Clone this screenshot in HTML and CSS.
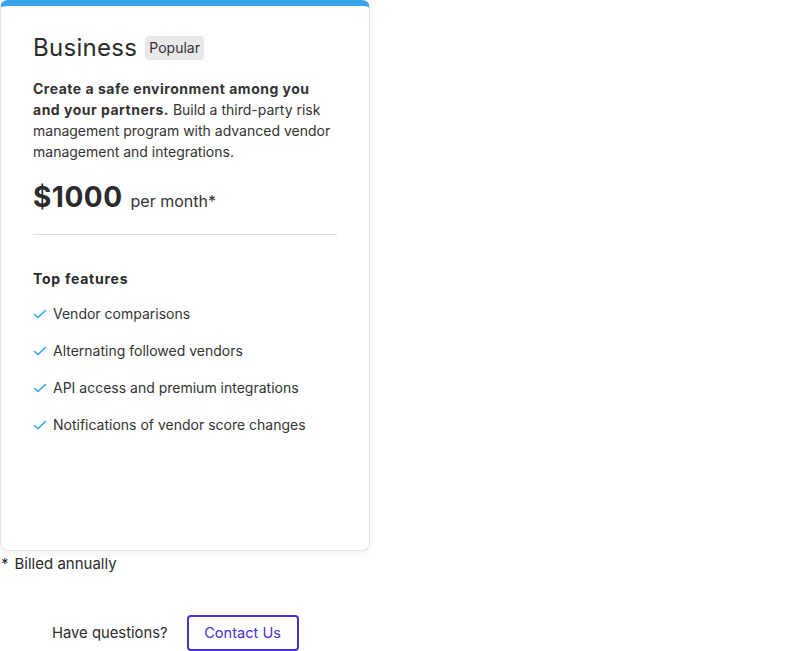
FILE: index.html
```html
<!DOCTYPE html>
<html>
<head>
<meta charset="utf-8">
<link rel="stylesheet" href="styles.css">
</head>
<body>
<div class="card">
  <div class="head">
    <h2 class="title">Business</h2>
    <span class="badge">Popular</span>
  </div>
  <p class="desc"><strong>Create a safe environment among you and your partners.</strong> Build a third-party risk management program with advanced vendor management and integrations.</p>
  <div class="price"><span class="amount">$1000</span><span class="period">per month*</span></div>
  <hr class="divider">
  <h3 class="features-title">Top features</h3>
  <ul class="features">
    <li><svg class="check" viewBox="0 0 14 14" width="14" height="14"><path d="M1.5 7.5 L5 10.5 L12.5 3.5" fill="none" stroke="#2fa4f0" stroke-width="1.6" stroke-linecap="round" stroke-linejoin="round"/></svg>Vendor comparisons</li>
    <li><svg class="check" viewBox="0 0 14 14" width="14" height="14"><path d="M1.5 7.5 L5 10.5 L12.5 3.5" fill="none" stroke="#2fa4f0" stroke-width="1.6" stroke-linecap="round" stroke-linejoin="round"/></svg>Alternating followed vendors</li>
    <li><svg class="check" viewBox="0 0 14 14" width="14" height="14"><path d="M1.5 7.5 L5 10.5 L12.5 3.5" fill="none" stroke="#2fa4f0" stroke-width="1.6" stroke-linecap="round" stroke-linejoin="round"/></svg>API access and premium integrations</li>
    <li><svg class="check" viewBox="0 0 14 14" width="14" height="14"><path d="M1.5 7.5 L5 10.5 L12.5 3.5" fill="none" stroke="#2fa4f0" stroke-width="1.6" stroke-linecap="round" stroke-linejoin="round"/></svg>Notifications of vendor score changes</li>
  </ul>
</div>
<p class="billed"><span class="star">*</span>Billed annually</p>
<div class="questions">
  <span class="q-text">Have questions?</span>
  <a class="contact" href="#">Contact Us</a>
</div>
</body>
</html>
```
FILE: styles.css
```css
* { box-sizing: border-box; }
body {
  margin: 0;
  font-family: Inter, "Noto Sans", sans-serif;
  color: #2b2b2b;
  background: #fff;
}
.card {
  width: 370px;
  height: 551px;
  border: 1px solid #e4e4e4;
  border-top: 6px solid #3aa3ee;
  border-radius: 8px;
  box-shadow: 0 2px 8px rgba(0,0,0,0.06);
  padding: 27px 32px 0 32px;
}
.head {
  display: flex;
  align-items: center;
  gap: 8px;
}
.title {
  margin: 0;
  font-size: 24px;
  font-weight: 400;
  line-height: 30px;
  letter-spacing: 0.3px;
  color: #2b2b2b;
}
.badge {
  background: #e8e8e8;
  border-radius: 4px;
  font-size: 14px;
  padding: 2px 4px;
  line-height: 20px;
  color: #333;
}
.desc {
  margin: 15px 0 0;
  font-size: 14px;
  line-height: 21px;
  color: #333;
}
.desc strong { font-weight: 700; letter-spacing: 0.5px; }
.price {
  margin-top: 15px;
  display: flex;
  align-items: baseline;
  gap: 8px;
}
.amount {
  font-size: 28px;
  font-weight: 700;
  line-height: 40px;
  letter-spacing: 0.5px;
  color: #2b2b2b;
}
.period {
  font-size: 16px;
  color: #333;
}
.divider {
  border: 0;
  border-top: 1px solid #dcdcdc;
  margin: 17px 0 0;
}
.features-title {
  margin: 34px 0 0;
  font-size: 14px;
  font-weight: 700;
  line-height: 20px;
  letter-spacing: 0.75px;
  color: #2b2b2b;
}
.features {
  list-style: none;
  margin: 15px 0 0;
  padding: 0;
  display: flex;
  flex-direction: column;
  gap: 17px;
}
.features li {
  display: flex;
  align-items: center;
  gap: 6px;
  font-size: 14px;
  line-height: 20px;
  color: #333;
}
.check { flex: none; }
.billed {
  margin: 3px 0 0;
  font-size: 15px;
  line-height: 20px;
  color: #2b2b2b;
}
.star { margin: 0 6px 0 1px; }
.questions {
  margin-top: 41px;
  display: flex;
  align-items: center;
  gap: 19px;
  padding-left: 52px;
}
.q-text {
  font-size: 14.8px;
  color: #2b2b2b;
}
.contact {
  display: inline-block;
  width: 112px;
  height: 36px;
  line-height: 32px;
  text-align: center;
  border: 2px solid #4a2fd8;
  border-radius: 4px;
  color: #4a2fd8;
  font-size: 14.6px;
  text-decoration: none;
}
```
